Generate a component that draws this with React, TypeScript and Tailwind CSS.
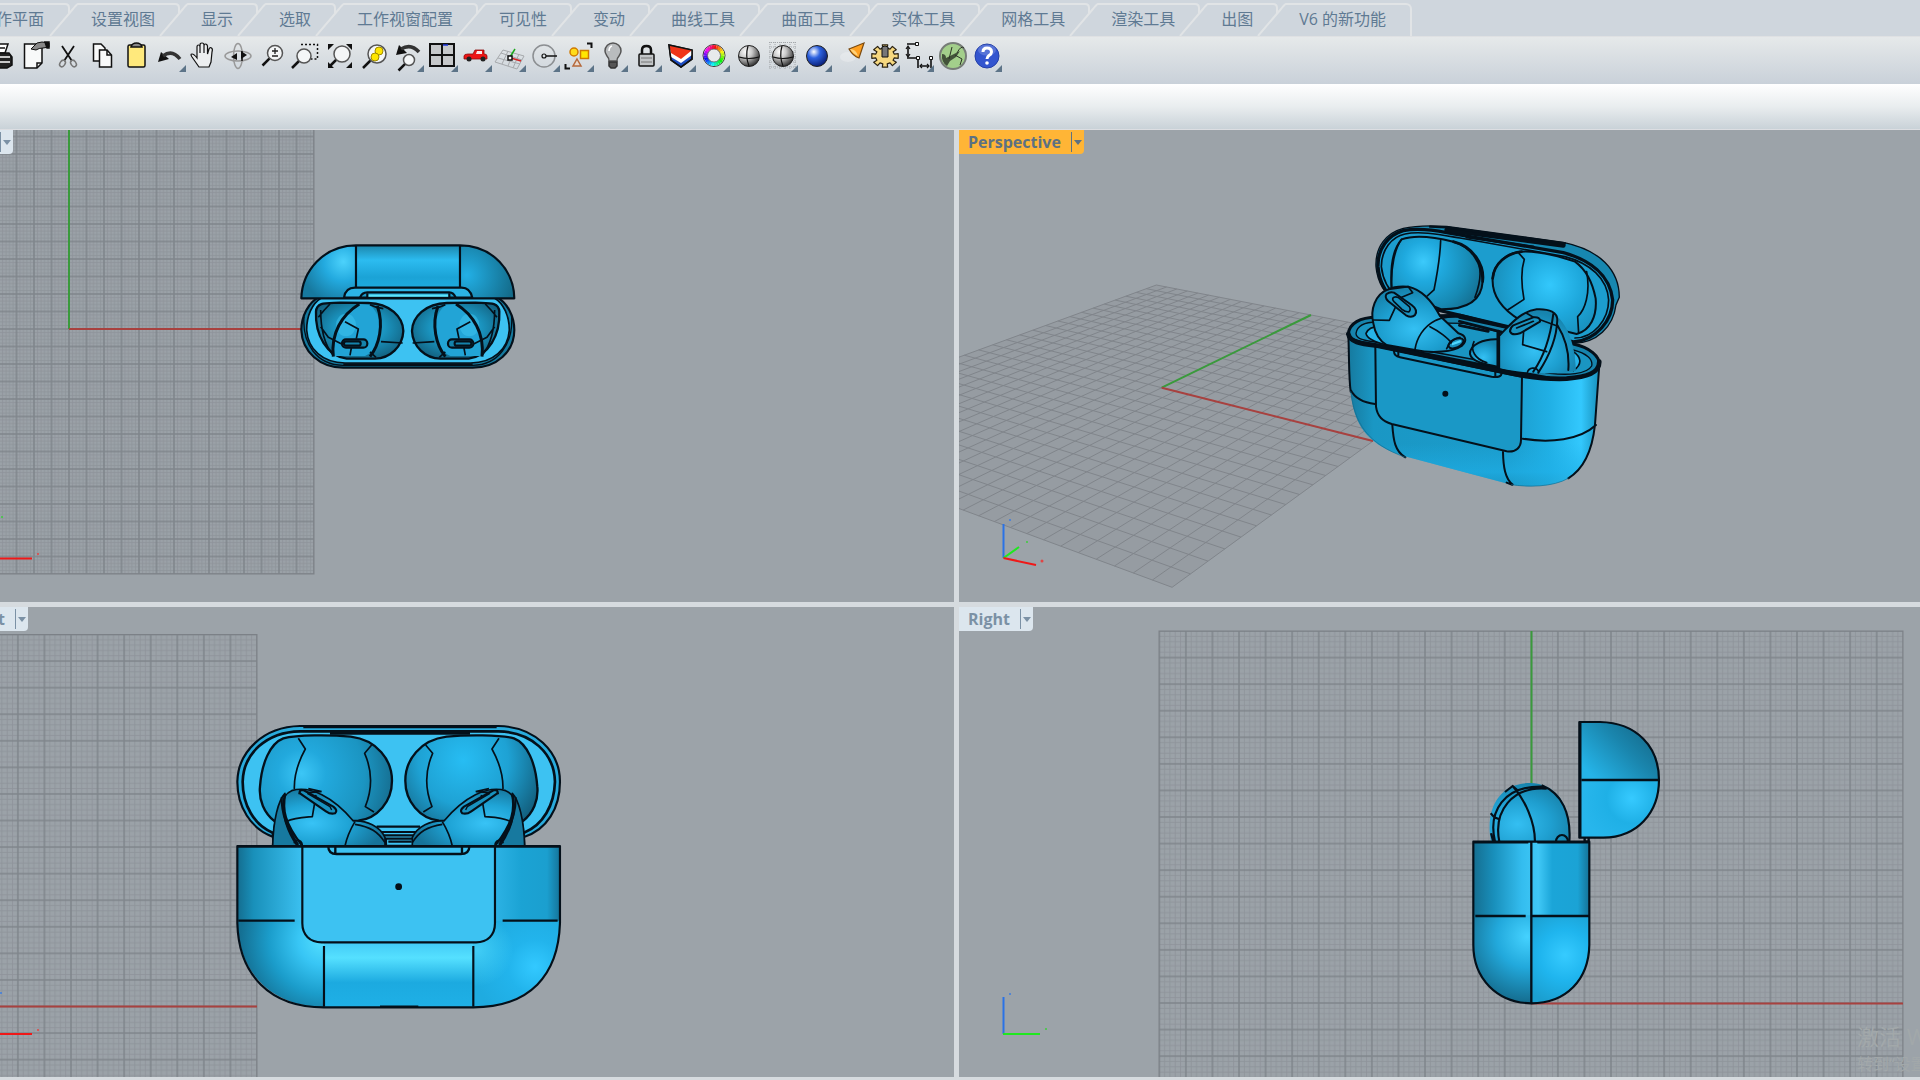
import type { ReactNode } from "react"

const tabs = [
    "作平面",
    "设置视图",
    "显示",
    "选取",
    "工作视窗配置",
    "可见性",
    "变动",
    "曲线工具",
    "曲面工具",
    "实体工具",
    "网格工具",
    "渲染工具",
    "出图",
    "V6 的新功能",
]

const LINE = "#04101a"

export default function App() {
    return (
        <div className="flex h-screen min-h-[640px] flex-col overflow-hidden bg-[#d8dce0] font-['Open_Sans','Noto_Sans_CJK_SC',sans-serif]">
            <TabBar />
            <Toolbar />
            <div className="h-[46px] shrink-0 border-b border-[#dcdee2] bg-linear-to-b from-white via-[#e9edef] to-[#c9d2d8]" />
            <main className="grid min-h-0 flex-1 grid-cols-[954fr_961fr] grid-rows-[472fr_470fr] gap-[5px] bg-[#d6dbdf] pb-[3px]">
                <Viewport title="Top" box="0 130 954 472" label="w-[13px]">
                    <TopView />
                </Viewport>
                <Viewport title="Perspective" box="959 130 961 472" active>
                    <PerspectiveView />
                </Viewport>
                <Viewport title="Front" box="0 607 954 470" label="w-7">
                    <FrontView />
                </Viewport>
                <Viewport title="Right" box="959 607 961 470">
                    <RightView />
                    <foreignObject x="1857" y="1020" width="63" height="57">
                        <div className="overflow-hidden whitespace-nowrap text-[#a2a8aa]">
                            <p className="text-[22px] leading-8">激活 Windows</p>
                            <p className="text-base leading-6">转到“设置”</p>
                        </div>
                    </foreignObject>
                </Viewport>
            </main>
        </div>
    )
}

function TabBar() {
    return (
        <nav className="h-9 shrink-0 overflow-hidden bg-[#cfd6dd] pt-[3px]">
            <ul className="-ml-1 flex h-[33px]">
                {tabs.map((tab, i) => (
                    <li key={tab} className="flex shrink-0">
                        {i > 0 && (
                            <svg className="h-[33px] w-[30px]" viewBox="0 0 30 33" fill="none" stroke="#e1e4e6" strokeWidth="2">
                                <path d="M0 1H17Q21 1 21 5V10" />
                                <path d="M2 33L25 6Q29 1 30 1" />
                            </svg>
                        )}
                        <button
                            className={
                                "border-t-2 border-[#e1e4e6] pb-[3px] text-base leading-6 whitespace-nowrap text-[#5f7a93] " +
                                (i === 0 ? "pr-1" : i === tabs.length - 1 ? "rounded-tr-md border-r-2 pr-6 pl-[13px]" : "pr-[3px] pl-[13px]")
                            }
                        >
                            {tab}
                        </button>
                    </li>
                ))}
            </ul>
        </nav>
    )
}

function Toolbar() {
    return (
        <div className="h-12 shrink-0 overflow-hidden border-t border-[#dfe1e3] bg-linear-to-b from-[#e6e9ea] to-[#c9d1d9] pt-[2px]">
            <div className="-ml-[17px] flex">
                {tools.map((tool) => (
                    <button key={tool.name} aria-label={tool.name} title={tool.name} className="size-[34px] shrink-0">
                        <svg viewBox="0 0 34 34" className="size-full" fill="none" stroke="#111" strokeWidth="1.5">
                            {tool.icon}
                            {tool.more && <path d="M33 26V33H26Z" fill="#5d7488" stroke="none" />}
                        </svg>
                    </button>
                ))}
            </div>
        </div>
    )
}

function Viewport(props: { title: string; box: string; label?: string; active?: boolean; children: ReactNode }) {
    const { title, box, label, active, children } = props
    return (
        <section className="relative min-h-0 min-w-0 overflow-hidden bg-[#9ca3a9]">
            <svg viewBox={box} preserveAspectRatio="xMinYMin slice" className="block h-full w-full">
                {children}
            </svg>
            <div className={"absolute top-0 left-0 flex justify-end overflow-hidden rounded-br-sm " + (label ?? "")}>
                <div
                    className={
                        "flex h-6 shrink-0 items-center text-base leading-6 font-bold " +
                        (active ? "bg-[#ffb536] text-[#5c7183]" : "bg-[#dce6ee] text-[#7b91a5]")
                    }
                >
                    <h2 className="pr-[10px] pl-[9px]">{title}</h2>
                    <button aria-label={title + " menu"} className="flex h-5 w-[13px] items-center justify-center border-l border-current">
                        <svg viewBox="0 0 8 5" className="h-[5px] w-2" fill="currentColor">
                            <path d="M0 0H8L4 5Z" />
                        </svg>
                    </button>
                </div>
            </div>
        </section>
    )
}

/* ---------- construction plane grids ---------- */

type GridProps = { id: string; x: number; y: number; step: number; right: number; bottom: number; left: number; top: number }

function FlatGrid({ id, x, y, step, left, top, right, bottom }: GridProps) {
    const minor = [1, 2, 3, 4].map((n) => (n * step) / 5)
    return (
        <>
            <defs>
                <pattern id={id} patternUnits="userSpaceOnUse" x={x} y={y} width={step} height={step}>
                    <rect width={step} height={step} fill="#9ba2a8" />
                    <path d={minor.map((m) => `M${m} 0V${step}M0 ${m}H${step}`).join("")} stroke="#8e949a" strokeWidth="0.9" />
                    <path d={`M0 0V${step}M0 0H${step}M${step} 0V${step}M0 ${step}H${step}`} stroke="#7f858b" strokeWidth="1.5" />
                </pattern>
            </defs>
            <rect x={left} y={top} width={right - left} height={bottom - top} fill={`url(#${id})`} stroke="#7c8187" />
        </>
    )
}

const HALF = 14

// plane coordinates in -1..1 to screen
function project(u: number, v: number) {
    const w = -0.1108 * u + 0.2098 * v + 1
    const x = (58.9 * u + 424.3 * v + 1161.7) / w
    const y = (4.7 * u - 6.6 * v + 387.7) / w
    return `${x.toFixed(1)} ${y.toFixed(1)}`
}

function PerspectiveGrid() {
    const lines: string[] = []
    for (let i = -HALF; i <= HALF; i++) {
        const t = i / HALF
        lines.push(`M${project(t, -1)}L${project(t, 1)}`, `M${project(-1, t)}L${project(1, t)}`)
    }
    return (
        <>
            <path d={`M${project(-1, -1)}L${project(1, -1)}L${project(1, 1)}L${project(-1, 1)}Z`} fill="#969ca2" />
            <path d={lines.join("")} stroke="#80858b" strokeWidth="1" />
        </>
    )
}

/* ---------- views ---------- */

function TopView() {
    return (
        <g fill="none">
            <FlatGrid id="gridTop" x={69} y={329} step={17.5} left={-176} top={84} right={314} bottom={574} />
            <path d="M69 130V329" stroke="#3a9a3c" strokeWidth="2" />
            <path d="M69 329H314" stroke="#a8413f" strokeWidth="2" />
            <path d="M0 558.5H32" stroke="#f01818" strokeWidth="2" />
            <circle cx="38" cy="554" r="1" fill="#e04545" />
            <circle cx="2" cy="517" r="1" fill="#3dcc3d" />
            <g transform="translate(280 230) scale(.3333)" stroke={LINE} strokeWidth="6.500" strokeLinejoin="round">
                <defs>
                    <linearGradient id="tMid" x2="0" y2="1">
                        <stop offset="0" stopColor="#1c86ac" />
                        <stop offset=".28" stopColor="#2cbcf0" />
                        <stop offset=".6" stopColor="#1ba3d6" />
                        <stop offset="1" stopColor="#1fb0e4" />
                    </linearGradient>
                    <radialGradient id="tLeft" gradientUnits="userSpaceOnUse" cx="190" cy="95" r="130">
                        <stop offset="0" stopColor="#4cd2fc" />
                        <stop offset=".45" stopColor="#23aadf" />
                        <stop offset="1" stopColor="#17799f" />
                    </radialGradient>
                    <radialGradient id="tRight" gradientUnits="userSpaceOnUse" cx="560" cy="135" r="150">
                        <stop offset="0" stopColor="#22b0e6" />
                        <stop offset="1" stopColor="#136987" />
                    </radialGradient>
                    <radialGradient id="tBud" cx=".5" cy=".45" r=".6">
                        <stop offset="0" stopColor="#35bdf0" />
                        <stop offset=".5" stopColor="#1a93be" />
                        <stop offset="1" stopColor="#125f7d" />
                    </radialGradient>
                </defs>
                <path d="M120 200C85 215 64 260 64 300C66 365 120 413 190 413H578C650 413 703 365 703 300C703 260 682 215 647 200Z" fill="#157a9f" />
                <path d="M125 203C95 220 80 260 80 300C84 358 128 399 195 399H572C640 399 684 358 688 300C688 260 672 220 642 203Z" fill="#3dc2f2" strokeWidth="5" />
                <path d="M72 260C66 340 110 406 190 406H578C655 406 700 340 695 260" strokeWidth="4" />
                <path d="M190 403H578" strokeWidth="7" />
                <TopBud />
                <g transform="translate(766 0) scale(-1 1)">
                    <TopBud />
                </g>
                <path d="M228 46C130 46 66 125 64 205H228Z" fill="url(#tLeft)" stroke="none" />
                <path d="M540 46C640 46 702 125 703 205H540Z" fill="url(#tRight)" stroke="none" />
                <path d="M228 46H540V205H228Z" fill="url(#tMid)" stroke="none" />
                <path d="M192 203C195 182 208 173 225 173H545C562 173 572 182 577 203Z" fill="#2cb4e6" />
                <path d="M240 203C244 191 250 187 262 187H508C518 187 523 192 527 203Z" fill="#1c9ccb" />
                <path d="M262 197H508" stroke="#5ee4fb" strokeWidth="7" />
                <path d="M64 205C66 125 130 46 228 46H540C640 46 702 125 703 205ZM228 46V173M540 46V173M262 190V203M508 190V203" />
            </g>
        </g>
    )
}

function TopBud() {
    return (
        <g>
            <path d="M108 245C110 215 140 220 180 218L265 219C330 220 369 262 370 303C368 350 330 385 285 386H200C140 378 105 315 108 245Z" fill="url(#tBud)" strokeWidth="7" />
            <path d="M235 222C185 255 158 300 158 378H255C310 350 318 270 270 224Z" fill="#22a4d6" stroke="none" />
            <ellipse cx="198" cy="285" rx="30" ry="34" fill="#45c9f5" opacity=".45" stroke="none" />
            <path d="M238 222C185 255 152 310 160 380M292 228C312 285 298 345 270 380" strokeWidth="9" />
            <path d="M270 224C285 232 296 234 310 236M195 275L235 297L229 326M303 335L368 339M214 354L210 376M122 240C122 300 135 345 158 374M115 262L133 240L150 222M122 290L145 322L185 342M270 366L288 382" strokeWidth="5" />
            <rect x="186" y="328" width="76" height="25" rx="12" fill="#1583ab" />
            <rect x="192" y="334" width="50" height="13" rx="6" />
        </g>
    )
}

function FrontView() {
    return (
        <g fill="none">
            <FlatGrid id="gridFront" x={257} y={1006.5} step={26.57} left={-487} top={634.5} right={257} bottom={1100} />
            <path d="M0 1006.5H257" stroke="#a8413f" strokeWidth="2" />
            <path d="M0 1034H32" stroke="#f01818" strokeWidth="2" />
            <circle cx="38" cy="1030" r="1" fill="#e04545" />
            <circle cx="1" cy="993" r="1" fill="#3d7de0" />
            <g transform="translate(220 710) scale(.3333)" stroke={LINE} strokeWidth="6.500" strokeLinejoin="round">
                <defs>
                    <radialGradient id="fCavL" gradientUnits="userSpaceOnUse" cx="245" cy="190" r="290">
                        <stop offset="0" stopColor="#3cc6f6" />
                        <stop offset=".25" stopColor="#22a9dd" />
                        <stop offset=".65" stopColor="#1b95c2" />
                        <stop offset="1" stopColor="#15698a" />
                    </radialGradient>
                    <radialGradient id="fCavR" gradientUnits="userSpaceOnUse" cx="730" cy="150" r="270">
                        <stop offset="0" stopColor="#27bdf3" />
                        <stop offset=".5" stopColor="#1ea2d4" />
                        <stop offset="1" stopColor="#115672" />
                    </radialGradient>
                    <linearGradient id="fSides">
                        <stop offset="0" stopColor="#146d8f" />
                        <stop offset=".05" stopColor="#1990ba" />
                        <stop offset=".2" stopColor="#3bc0f0" />
                        <stop offset=".8" stopColor="#2cb2e4" />
                        <stop offset=".88" stopColor="#1ba3d4" />
                        <stop offset=".96" stopColor="#1b9fcf" />
                        <stop offset="1" stopColor="#157499" />
                    </linearGradient>
                    <linearGradient id="fMid" x2="0" y2="1">
                        <stop offset="0" stopColor="#3bc3f3" />
                        <stop offset=".3" stopColor="#55e0ff" />
                        <stop offset=".65" stopColor="#1caae0" />
                        <stop offset="1" stopColor="#1fb0e6" />
                    </linearGradient>
                    <radialGradient id="fCornerL" gradientUnits="userSpaceOnUse" cx="310" cy="690" r="250">
                        <stop offset="0" stopColor="#55e0ff" />
                        <stop offset=".3" stopColor="#38c6f5" />
                        <stop offset=".65" stopColor="#1b9dcb" />
                        <stop offset="1" stopColor="#146f92" />
                    </radialGradient>
                    <radialGradient id="fCornerR" gradientUnits="userSpaceOnUse" cx="945" cy="770" r="180">
                        <stop offset="0" stopColor="#33c9ff" />
                        <stop offset=".45" stopColor="#22b4ec" />
                        <stop offset="1" stopColor="#1fabe0" />
                    </radialGradient>
                    <radialGradient id="fBud" cx=".35" cy=".6" r=".65">
                        <stop offset="0" stopColor="#38c3f6" />
                        <stop offset=".5" stopColor="#1fa4d6" />
                        <stop offset="1" stopColor="#167399" />
                    </radialGradient>
                    <radialGradient id="fGlow" gradientUnits="userSpaceOnUse" cx="770" cy="720" r="110">
                        <stop offset="0" stopColor="#50dcff" stopOpacity=".7" />
                        <stop offset="1" stopColor="#50dcff" stopOpacity="0" />
                    </radialGradient>
                </defs>
                <path d="M240 48H835C945 50 1020 125 1020 215C1020 295 980 360 912 381L905 408H165L158 380C92 356 52 290 52 215C54 125 130 50 240 48Z" fill="#2aabdc" />
                <path d="M240 64H835C935 66 1003 130 1005 215C1003 285 970 345 912 368L905 408H165L158 368C102 345 68 285 68 215C70 130 140 66 240 64Z" fill="#3dc2f2" strokeWidth="8" />
                <path d="M330 70H750M250 50H830" strokeWidth="9" />
                <path d="M470 350H600M480 366H592M484 376H588M494 386H580V408M498 386V408M505 395H575" />
                <FrontCavity fill="url(#fCavL)" />
                <path d="M907 335C940 310 956 270 952 230C947 160 922 100 882 85C842 74 740 74 680 80C600 90 556 150 556 212C556 275 600 325 657 332Z" fill="url(#fCavR)" stroke="none" />
                <g transform="translate(1072 0) scale(-1 1)">
                    <FrontCavity fill="none" />
                    <FrontBud />
                </g>
                <FrontBud />
                <path d="M52 408H1020V640H52Z" fill="url(#fSides)" stroke="none" />
                <path d="M52 632H320V892C155 892 55 790 52 632Z" fill="url(#fCornerL)" stroke="none" />
                <path d="M1020 632H755V892C925 892 1018 790 1020 632Z" fill="url(#fCornerR)" stroke="none" />
                <path d="M312 680H760V892H312Z" fill="url(#fMid)" stroke="none" />
                <path d="M760 632H890V840H760Z" fill="url(#fGlow)" stroke="none" />
                <path d="M52 408H1020V640C1015 795 930 892 760 892H312C150 892 56 795 52 640Z" />
                <path d="M247 408V640C247 675 270 697 305 697H768C803 697 825 675 825 640V408Z" fill="#3dc2f2" />
                <path d="M55 632H224M848 632H1013M312 708V890M760 708V890M480 890H595" />
                <path d="M325 410C325 425 335 432 350 432H722C740 432 748 425 748 410M346 410V432M726 410V432" strokeWidth="7" />
                <path d="M52 409H1020" strokeWidth="8" />
                <circle cx="536" cy="530" r="7" fill={LINE} />
            </g>
        </g>
    )
}

function FrontCavity({ fill }: { fill: string }) {
    return (
        <>
            <path d="M165 335C132 310 116 270 120 230C125 160 150 100 190 85C230 74 332 74 392 80C472 90 516 150 516 212C516 275 472 325 415 332Z" fill={fill} strokeWidth="7" />
            <path d="M235 85L256 117C235 155 222 195 223 237M455 105L434 130C456 180 460 230 436 290L462 306" strokeWidth="5" />
        </>
    )
}

function FrontBud() {
    return (
        <>
            <path d="M158 408C160 330 180 255 215 242C270 225 340 262 400 333C440 330 480 350 495 382V408Z" fill="url(#fBud)" strokeWidth="5" />
            <path d="M158 408C160 330 175 270 195 250C178 310 205 370 232 408Z" fill="#17799f" strokeWidth="5" />
            <path d="M185 262C184 320 210 370 235 405M196 252C186 300 195 340 245 405" />
            <path d="M198 335C225 322 250 322 277 320L288 255M405 335C390 360 380 385 375 408M405 343C450 350 475 365 495 398M235 250L302 245M265 236L305 245M222 400A12 12 0 0 1 246 408" strokeWidth="5" />
            <path d="M250 240L340 290Q355 302 345 310Q332 314 318 304L240 250Q236 240 250 240Z" fill="#1992bf" />
            <path d="M262 250L330 290L335 300" strokeWidth="4" />
        </>
    )
}

function RightView() {
    return (
        <g fill="none">
            <FlatGrid id="gridRight" x={1531.3} y={1003} step={26.57} left={1159} top={631} right={1903} bottom={1100} />
            <path d="M1531.5 631V1003" stroke="#3a9a3c" strokeWidth="2" />
            <path d="M1531 1003.5H1903" stroke="#a8413f" strokeWidth="2" />
            <path d="M1003.5 997V1034" stroke="#2a72e6" strokeWidth="2" />
            <path d="M1003 1034H1040" stroke="#1fe81f" strokeWidth="2" />
            <circle cx="1010" cy="994" r="1" fill="#3d7de0" />
            <circle cx="1046" cy="1029" r="1" fill="#3dcc3d" />
            <g transform="translate(1440 700) scale(.3333)" stroke={LINE} strokeWidth="6.500" strokeLinejoin="round">
                <defs>
                    <linearGradient id="rSide">
                        <stop offset="0" stopColor="#156e90" />
                        <stop offset=".18" stopColor="#1990bc" />
                        <stop offset=".42" stopColor="#34bdef" />
                        <stop offset=".56" stopColor="#40c8f6" />
                        <stop offset=".68" stopColor="#1ba5d8" />
                        <stop offset=".9" stopColor="#1ba3d5" />
                        <stop offset="1" stopColor="#157297" />
                    </linearGradient>
                    <radialGradient id="rBotL" gradientUnits="userSpaceOnUse" cx="262" cy="710" r="205">
                        <stop offset="0" stopColor="#45d2ff" />
                        <stop offset=".45" stopColor="#22a9dc" />
                        <stop offset="1" stopColor="#14698a" />
                    </radialGradient>
                    <radialGradient id="rBotR" gradientUnits="userSpaceOnUse" cx="375" cy="765" r="150">
                        <stop offset="0" stopColor="#36cbff" />
                        <stop offset=".5" stopColor="#1fb5ee" />
                        <stop offset="1" stopColor="#1b9fd0" />
                    </radialGradient>
                    <linearGradient id="rLidTop" x1="0" y1=".7" x2="1" y2="0">
                        <stop offset="0" stopColor="#25b4e8" />
                        <stop offset=".5" stopColor="#1a86ae" />
                        <stop offset="1" stopColor="#135f7d" />
                    </linearGradient>
                    <radialGradient id="rLidBot" gradientUnits="userSpaceOnUse" cx="575" cy="295" r="150">
                        <stop offset="0" stopColor="#36caff" />
                        <stop offset=".5" stopColor="#1fb0e6" />
                        <stop offset="1" stopColor="#27b6ec" />
                    </radialGradient>
                    <radialGradient id="rBud" cx=".35" cy=".7" r=".7">
                        <stop offset="0" stopColor="#34bff2" />
                        <stop offset=".6" stopColor="#1f9fd0" />
                        <stop offset="1" stopColor="#1884ad" />
                    </radialGradient>
                </defs>
                <path d="M153 425C134 325 178 249 270 249C352 250 396 320 388 425Z" fill="url(#rBud)" stroke="none" />
                <path d="M305 256C365 280 394 340 388 425M165 425C144 335 190 256 310 260M178 425C160 335 215 258 320 266M218 258C255 300 285 365 285 425M152 340L163 352L178 358M195 276L218 258L232 270M153 400L160 425" />
                <path d="M348 425A18 20 0 0 1 384 425" strokeWidth="6.500" />
                <path d="M418 66H480C590 68 657 140 657 240H418Z" fill="url(#rLidTop)" stroke="none" />
                <path d="M418 240H657C657 340 590 412 490 413H418Z" fill="url(#rLidBot)" stroke="none" />
                <path d="M418 66H480C590 68 657 140 657 240C657 340 590 412 490 413H418Z" />
                <path d="M421 66V413M425 240H657M434 413V425H446V413" strokeWidth="7" />
                <path d="M100 425H448V648H100Z" fill="url(#rSide)" stroke="none" />
                <path d="M100 646H274V910C170 908 100 835 100 735Z" fill="url(#rBotL)" stroke="none" />
                <path d="M274 646H448V735C446 840 378 910 274 910Z" fill="url(#rBotR)" stroke="none" />
                <path d="M100 425H448V735C446 840 378 910 274 910C170 908 100 835 100 735Z" />
                <path d="M274 425V910M106 648H257M274 648H448M100 427H265M292 427H448" strokeWidth="7" />
            </g>
        </g>
    )
}

function PerspectiveView() {
    return (
        <g fill="none">
            <PerspectiveGrid />
            <path d="M1161.7 387.7L1311 315" stroke="#3a9a3c" strokeWidth="2" />
            <path d="M1161.7 387.7L1373 441" stroke="#a8413f" strokeWidth="2" />
            <path d="M1003.5 558V524" stroke="#2a72e6" strokeWidth="2" />
            <path d="M1003.5 558L1019 547" stroke="#1fe81f" strokeWidth="2" />
            <path d="M1003.5 558L1036 565" stroke="#f01818" strokeWidth="2" />
            <circle cx="1010" cy="520" r="1" fill="#3d7de0" />
            <circle cx="1027" cy="542" r="1" fill="#3dcc3d" />
            <circle cx="1042" cy="561" r="1.5" fill="#e04545" />
            <g transform="translate(1320 210) scale(.3333)" stroke={LINE} strokeWidth="6" strokeLinejoin="round" strokeLinecap="round">
                <defs>
                    <radialGradient id="pCavL" gradientUnits="userSpaceOnUse" cx="310" cy="155" r="200">
                        <stop offset="0" stopColor="#3ccafb" />
                        <stop offset=".3" stopColor="#1fa9de" />
                        <stop offset=".7" stopColor="#178ab4" />
                        <stop offset="1" stopColor="#146a8b" />
                    </radialGradient>
                    <radialGradient id="pCavR" gradientUnits="userSpaceOnUse" cx="690" cy="225" r="190">
                        <stop offset="0" stopColor="#33c8fc" />
                        <stop offset=".5" stopColor="#1ea8dc" />
                        <stop offset="1" stopColor="#178ab5" />
                    </radialGradient>
                    <linearGradient id="pBody">
                        <stop offset="0" stopColor="#167a9f" />
                        <stop offset=".1" stopColor="#1a97c4" />
                        <stop offset=".65" stopColor="#1b9ccc" />
                        <stop offset=".8" stopColor="#20afe4" />
                        <stop offset=".93" stopColor="#33c8fd" />
                        <stop offset="1" stopColor="#1992be" />
                    </linearGradient>
                    <radialGradient id="pBud" cx=".45" cy=".65" r=".6">
                        <stop offset="0" stopColor="#34c0f3" />
                        <stop offset=".6" stopColor="#1d9fd0" />
                        <stop offset="1" stopColor="#1784ae" />
                    </radialGradient>
                    <linearGradient id="pLow" x2="0" y2="1">
                        <stop offset=".55" stopColor="#1fb0e8" stopOpacity="0" />
                        <stop offset=".85" stopColor="#1fb0e8" stopOpacity=".6" />
                        <stop offset="1" stopColor="#1a9bcb" stopOpacity=".3" />
                    </linearGradient>
                </defs>

                {/* lid */}
                <path d="M250 55C200 68 165 110 168 170C172 215 195 255 225 270L760 400C830 400 880 350 888 285L898 262C898 180 840 120 730 97L380 49C330 46 280 48 250 55Z" fill="#1787b0" strokeWidth="4" />
                <path d="M250 62C205 75 172 115 174 170C178 215 198 250 225 270L760 396C830 390 878 330 878 270C870 195 810 150 730 128L380 68C320 56 280 56 250 62Z" fill="#1c9dce" strokeWidth="10" />
                <path d="M255 72C215 80 184 120 184 170C188 205 205 240 232 262M255 72C300 62 360 74 420 84L735 140C810 160 862 205 866 270C866 330 820 384 765 384" strokeWidth="5" />
                <path d="M380 60L730 106" strokeWidth="14" />
                <path d="M330 50L380 52L735 100M440 82L640 110" strokeWidth="7" />
                <path d="M245 88C280 75 340 80 400 95C455 110 485 160 488 215C485 265 450 298 365 298L215 240C210 170 220 115 245 88Z" fill="url(#pCavL)" />
                <path d="M245 88C225 115 212 170 215 235M362 92C360 150 350 200 342 240L322 258M478 170C485 200 475 235 465 262" strokeWidth="5" />
                <path d="M600 125C650 120 720 140 765 155C800 180 818 220 827 265C832 320 810 362 770 372L600 330C550 300 515 260 518 205C522 160 560 130 600 125Z" fill="url(#pCavR)" />
                <path d="M597 130L613 148C600 190 605 230 612 268L563 300M800 185C812 250 795 300 773 320L776 370" strokeWidth="5" />
                <path d="M400 95C460 110 495 165 488 215M518 205C522 160 560 130 605 125" strokeWidth="8" />

                {/* inside of the case */}
                <path d="M85 372C88 340 120 322 170 322L420 316L760 402C810 412 840 440 838 465C825 515 760 512 690 505L230 415L165 405C110 395 84 390 85 372Z" fill="#1784ad" strokeWidth="9" />
                <path d="M108 370C112 345 140 336 170 336L430 340L760 420C800 430 820 448 815 468C800 494 740 496 690 490L240 408L165 396C125 390 108 385 108 370Z" fill="#1a95c2" strokeWidth="4" />
                <path d="M138 370C145 355 160 350 175 350L200 405C160 395 140 385 138 370ZM760 425C782 440 790 462 760 482Z" fill="#27b4e8" strokeWidth="5" />
                <path d="M418 322L556 352M418 334L545 366M418 346L505 364" strokeWidth="8" />

                {/* left bud */}
                <path d="M205 238C165 252 150 300 160 340C165 370 175 390 200 405L285 420C340 432 400 425 425 408C445 390 435 375 415 370L360 318C335 270 300 238 265 230C240 228 220 230 205 238Z" fill="url(#pBud)" />
                <path d="M285 418C290 385 310 350 345 332C365 322 400 318 430 322M330 350C355 362 385 385 395 400M380 416C385 400 400 385 420 382M160 330L208 331L226 292M205 238L265 230L278 248L245 262" strokeWidth="5" />
                <path d="M222 248L275 285Q295 300 285 315Q275 325 258 316L205 274Q192 262 200 252Q210 244 222 248Z" fill="#1a93c0" />
                <path d="M222 262Q232 258 242 268L268 290Q274 300 266 306Q255 306 246 298L222 275Q214 266 222 262Z" strokeWidth="5" />
                <ellipse cx="408" cy="400" rx="24" ry="13" transform="rotate(-25 408 400)" />
                <path d="M398 402L420 394" stroke="#4fd8ff" strokeWidth="7" />

                {/* right bud */}
                <path d="M540 388C490 384 448 405 450 432C455 455 490 462 540 472Z" fill="url(#pBud)" />
                <path d="M462 395C450 420 465 448 500 458" strokeWidth="5" />
                <path d="M540 375C580 340 605 305 660 298C720 300 765 370 768 482C720 495 600 490 540 475Z" fill="url(#pBud)" stroke="none" />
                <path d="M535 365V480" strokeWidth="11" />
                <path d="M540 375C570 345 600 305 650 298C690 296 712 308 712 330C710 390 680 450 655 488M700 312C690 390 665 450 640 485M712 345C740 390 748 440 745 480" />
                <path d="M612 350L608 404L680 425M620 310L640 322L712 348M622 488A18 18 0 0 1 656 485" strokeWidth="5" />
                <path d="M580 346L640 322Q662 320 660 335L600 370Q575 378 570 364Q570 354 580 346Z" fill="#1a93c0" />
                <path d="M590 354L640 334" strokeWidth="5" />

                {/* shell */}
                <path d="M85 375C110 400 140 405 165 408L545 490C640 510 790 520 836 465L825 645C815 720 795 780 745 805C700 832 620 832 575 824L240 735C140 700 100 640 92 545C86 490 88 440 85 375Z" fill="url(#pBody)" stroke="none" />
                <path d="M92 545C200 600 400 660 603 700C700 700 780 690 825 645C815 720 795 780 745 805C700 832 620 832 575 824L240 735C140 700 100 640 92 545Z" fill="url(#pLow)" stroke="none" />
                <path d="M166 408L168 590C172 620 188 633 215 642L560 724C590 728 603 710 603 690L606 500L545 488Z" fill="#1a98c6" />
                <path d="M85 375C88 450 86 500 92 545M838 465L825 645C818 710 795 775 745 805M575 824L560 818M92 540C105 565 130 578 165 582M608 686C690 700 780 690 828 645M217 645C220 690 225 725 256 742M549 726C550 770 555 805 578 824" />
                <path d="M92 545C105 640 140 700 256 742M575 824C620 832 700 832 745 805" stroke="#146d90" strokeWidth="2" />
                <path d="M85 372C90 395 120 402 165 406L545 484C620 502 690 508 740 506C800 500 838 490 838 455" strokeWidth="14" />
                <path d="M222 424Q222 438 240 442L515 500Q545 505 545 488M235 424V440M526 486V498" />
                <circle cx="376" cy="551" r="6" fill={LINE} />
            </g>
        </g>
    )
}

/* ---------- toolbar icons ---------- */

function Lens({ x, y, r, fill = "#f4f6f7" }: { x: number; y: number; r: number; fill?: string }) {
    return (
        <>
            <circle cx={x} cy={y} r={r} fill={fill} stroke="#555" />
            <path d={`M${x - r * 0.75} ${y + r * 0.75}L${x - r - 5} ${y + r + 5}`} strokeWidth="2.5" />
        </>
    )
}

function Sphere({ light, dark }: { light: string; dark: string }) {
    const id = "ball" + light.slice(1) + dark.slice(1)
    return (
        <>
            <radialGradient id={id} cx=".35" cy=".3" r=".75">
                <stop offset="0" stopColor="#fff" />
                <stop offset=".4" stopColor={light} />
                <stop offset="1" stopColor={dark} />
            </radialGradient>
            <circle cx="18" cy="17" r="10.5" fill={`url(#${id})`} stroke="#222" strokeWidth="1" />
        </>
    )
}

const wheel = Array.from({ length: 24 }, (_, i) => {
    const a = (i * Math.PI) / 12
    const b = ((i + 1.1) * Math.PI) / 12
    const at = (t: number) => `${(17 + 8.5 * Math.sin(t)).toFixed(2)} ${(16.5 - 8.5 * Math.cos(t)).toFixed(2)}`
    return { d: `M${at(a)}L${at(b)}`, color: `hsl(${(i * 15) % 360} 90% 50%)` }
})

// eight teeth round the hub at 18,17
const gear = Array.from({ length: 8 }, (_, i) => {
    const p = (r: number, t: number) => {
        const a = ((i + t) * Math.PI) / 4
        return `${(18 + r * Math.cos(a)).toFixed(1)} ${(17 + r * 0.85 * Math.sin(a)).toFixed(1)}`
    }
    return `${i ? "L" : "M"}${p(9.5, -0.3)}L${p(13.5, -0.26)}L${p(13.5, 0.26)}L${p(9.5, 0.3)}`
}).join("")

const tools: { name: string; more?: boolean; icon: ReactNode }[] = [
    {
        name: "Print",
        icon: (
            <>
                <path d="M8 14L12 5H25L22 14Z" fill="#fff" />
                <path d="M4 14H26L29 18V26L24 29H4Z" fill="#222" />
                <path d="M17 18H27M17 23H27" stroke="#fff" />
                <path d="M17 9H22" />
            </>
        ),
    },
    {
        name: "Document Properties",
        icon: (
            <>
                <path d="M7.500 5H25V24L20 29H7.500Z" fill="#f8f9f9" />
                <path d="M25 24H20V29" />
                <path d="M14 10L20 4Q24 2 32 4V8L26 9Q22 9 19 11Z" fill="#888" strokeWidth="1" />
                <path d="M28 3H32V9H30Z" fill="#111" />
            </>
        ),
    },
    {
        name: "Cut",
        icon: (
            <>
                <path d="M11 7L21 22M23 7L13 22" strokeWidth="1.8" />
                <ellipse cx="11.500" cy="24.500" rx="2.500" ry="3.500" transform="rotate(35 11.500 24.500)" stroke="#777" />
                <ellipse cx="22.500" cy="24.500" rx="2.500" ry="3.500" transform="rotate(-35 22.500 24.500)" stroke="#777" />
            </>
        ),
    },
    {
        name: "Copy",
        icon: (
            <>
                <path d="M8.500 5H16L20 9V22H8.500Z" fill="#f8f9f9" />
                <path d="M14.500 11H22L26.500 16V28H14.500Z" fill="#f8f9f9" />
                <path d="M22 11V16H26" />
            </>
        ),
    },
    {
        name: "Paste",
        icon: (
            <>
                <rect x="9" y="6" width="17" height="22" rx="1.500" fill="#ffe97c" />
                <path d="M12 8Q13 4 17.500 4Q22 4 23 8Z" fill="#888" />
            </>
        ),
    },
    {
        name: "Undo",
        more: true,
        icon: (
            <>
                <path d="M5 23L8 13L16 20Z" fill="#111" stroke="none" />
                <path d="M10 17Q19 10 27 20" stroke="#333" strokeWidth="3.500" />
            </>
        ),
    },
    {
        name: "Pan",
        icon: (
            <path
                d="M12 28L5 18Q3 15 5 15Q7 15 10 19V8Q10 6 11.500 6Q13 6 13 8V14V6Q13 4 15 4Q17 4 17 6V14V7Q17 5 18.500 5Q20 5 20.500 7V15L22 10Q23 8 24.500 9Q26 10 25 13L24 23L22 28Z"
                fill="#eceeef"
                strokeWidth="1.2"
            />
        ),
    },
    {
        name: "Rotate View",
        icon: (
            <>
                <ellipse cx="17" cy="17" rx="13" ry="5" stroke="#999" />
                <ellipse cx="17" cy="17" rx="4.500" ry="12.500" stroke="#999" />
                <path d="M20 12L26 16L20 20ZM16 14V21L10 18Z" fill="#111" stroke="none" />
                <path d="M21 12V22" />
            </>
        ),
    },
    {
        name: "Zoom Dynamic",
        icon: (
            <>
                <Lens x={20} y={14} r={7.5} />
                <path d="M20 9V15M17 12H23M17 17H23" stroke="#222" strokeWidth="1.300" />
            </>
        ),
    },
    {
        name: "Zoom Window",
        icon: (
            <>
                <path d="M12 5.500H28.500V20H22" strokeDasharray="2 2" />
                <Lens x={15} y={17} r={7} />
            </>
        ),
    },
    {
        name: "Zoom Extents",
        icon: (
            <>
                <Lens x={19} y={15} r={8} />
                <path d="M5 5H11L5 11ZM29 5V11L23 5ZM5 29V23L11 29ZM29 29H23L29 23Z" fill="#111" stroke="none" />
            </>
        ),
    },
    {
        name: "Zoom Selected",
        icon: (
            <>
                <Lens x={20} y={15} r={9} />
                <circle cx="22" cy="12" r="4" fill="#ffe600" stroke="#a08b00" strokeWidth="1" />
                <circle cx="18" cy="18" r="4" fill="#ffe600" stroke="#a08b00" strokeWidth="1" />
            </>
        ),
    },
    {
        name: "Undo View Change",
        more: true,
        icon: (
            <>
                <path d="M5 16L8 6L16 14Z" fill="#111" stroke="none" />
                <path d="M10 10Q20 4 28 13" stroke="#333" strokeWidth="3.500" />
                <Lens x={18} y={21} r={5.5} />
            </>
        ),
    },
    {
        name: "Four Viewports",
        more: true,
        icon: (
            <>
                <rect x="5" y="5" width="24" height="22" fill="#c6c8ca" strokeWidth="2" />
                <path d="M17 5V27M5 16H29" strokeWidth="2" />
                <path d="M18 6H23" stroke="#1d35d8" strokeWidth="1.500" />
            </>
        ),
    },
    {
        name: "Named Views",
        more: true,
        icon: (
            <>
                <path d="M5 20V17Q5 15 9 15H14L16 11H25V15Q28 15 28 17V20Z" fill="#ed1515" stroke="#8c0c0c" strokeWidth=".8" />
                <path d="M17 15L18 12H23V15Z" fill="#fbe9e9" stroke="none" />
                <circle cx="10" cy="20" r="2.500" fill="#222" stroke="none" />
                <circle cx="24" cy="20" r="2.500" fill="#222" stroke="none" />
            </>
        ),
    },
    {
        name: "Set CPlane",
        more: true,
        icon: (
            <>
                <path d="M10 11L31 17L24 30L2 23ZM15 12L9 25M20 14L15 27M26 15L20 29M8 14L29 21M5 19L27 25" stroke="#a6a9ac" strokeWidth="1" />
                <path d="M17 18L22 10" stroke="#1aa81a" />
                <path d="M18 19L28 22" stroke="#d42222" />
                <rect x="15" y="17" width="4" height="4" fill="#fff" />
            </>
        ),
    },
    {
        name: "Object Snap",
        more: true,
        icon: (
            <>
                <circle cx="17" cy="17" r="11" stroke="#8c8f92" />
                <circle cx="17" cy="17" r="2" strokeWidth="1.200" />
                <path d="M19 17H30" />
            </>
        ),
    },
    {
        name: "Select",
        more: true,
        icon: (
            <>
                <circle cx="13" cy="13" r="4" fill="#ffdc1a" stroke="#d07a00" />
                <rect x="19.500" y="11.500" width="8" height="8" fill="#ffe600" stroke="#d07a00" />
                <path d="M16 20L20 27H12Z" stroke="#b5683a" fill="#e8d8cd" />
                <path d="M26 4.500H30.500V9M4.500 25V29.500H9" strokeWidth="2" />
            </>
        ),
    },
    {
        name: "Hide",
        more: true,
        icon: (
            <>
                <path d="M14 22Q14 19 12 17Q10 14 10 12A8 8 0 0 1 26 12Q26 14 24 17Q22 19 22 22Z" fill="#b9bcbe" stroke="#555" />
                <path d="M14 23H22V27L20 29H16L14 27Z" fill="#555" stroke="#333" />
                <path d="M14 12Q14 8 17 7" stroke="#fff" />
            </>
        ),
    },
    {
        name: "Lock",
        more: true,
        icon: (
            <>
                <path d="M13 15V11Q13 7 17.500 7Q22 7 22 11V15" strokeWidth="2.500" />
                <rect x="10" y="15" width="15" height="12" rx="1" fill="#c2c5c7" />
                <path d="M12 19H23M12 23H23" stroke="#777" strokeWidth="1" />
            </>
        ),
    },
    {
        name: "Layers",
        more: true,
        icon: (
            <>
                <path d="M6 6L29 11V20L18 28L8 21Z" fill="#1d4cc0" />
                <path d="M6 7L29 11V16L18 24L8 18Z" fill="#fff" stroke="none" />
                <path d="M6 6L18 9L29 11L28 12L18 20L8 14Z" fill="#f0351a" stroke="none" />
                <path d="M6 6L29 11V20L18 28L8 21Z" />
            </>
        ),
    },
    {
        name: "Object Properties",
        more: true,
        icon: (
            <>
                <circle cx="17" cy="16.500" r="11" fill="#fff" stroke="#333" strokeWidth="1" />
                {wheel.map((w) => (
                    <path key={w.d} d={w.d} stroke={w.color} strokeWidth="4" />
                ))}
                <circle cx="17" cy="16.500" r="6.500" fill="#e7eaec" stroke="#555" strokeWidth=".8" />
            </>
        ),
    },
    {
        name: "Shade",
        icon: (
            <>
                <Sphere light="#c9c9c9" dark="#2a2a2a" />
                <path d="M8 18Q18 21 28 18M17 7Q14 17 18 27" strokeWidth="1.200" />
            </>
        ),
    },
    {
        name: "Shaded Viewport",
        more: true,
        icon: (
            <>
                <path d="M4 3.500H32M4 8H32M4 13H32M4 18H32M4 23H32M4 28H32M5 3V30M10 3V30M15 3V30M20 3V30M25 3V30M30 3V30" stroke="#a4a8ab" strokeDasharray="1 1" strokeWidth="1" />
                <Sphere light="#cacaca" dark="#2b2b2b" />
                <path d="M8 18Q18 21 28 18M17 7Q14 17 18 27" strokeWidth="1.200" />
            </>
        ),
    },
    {
        name: "Render",
        more: true,
        icon: <Sphere light="#2d62e0" dark="#071a70" />,
    },
    {
        name: "Spotlight",
        more: true,
        icon: (
            <>
                <ellipse cx="15" cy="18" rx="8" ry="5" fill="#fff" opacity=".25" stroke="none" />
                <path d="M16 10L31 4L26 19Q20 17 16 10Z" fill="#ffa020" stroke="#7a4a10" strokeWidth="1.200" />
                <path d="M17 10Q23 10 25 17Q20 15 17 10Z" fill="#ffd27a" stroke="none" />
            </>
        ),
    },
    {
        name: "Options",
        more: true,
        icon: (
            <>
                <path d={gear + "Z"} fill="#f6d880" stroke="#2a2212" strokeWidth="1.200" strokeLinejoin="round" />
                <path d="M15 8Q18 6 21 8V18H15Z" fill="#777" strokeWidth="1" />
            </>
        ),
    },
    {
        name: "Dimension",
        more: true,
        icon: (
            <>
                <path d="M6 5H16M7 8V17M6 19H17M17 19V29M30 19V29M19 27H28" strokeWidth="1.600" />
                <path d="M5 10L7 7L9 10M5 15L7 18L9 15M21 25L19 27L21 29M26 25L28 27L26 29" strokeWidth="1.200" />
                <path d="M14.500 3.500h3v3h-3zM15.500 17.500h3v3h-3zM28.500 17.500h3v3h-3z" fill="#fff" strokeWidth="1" />
            </>
        ),
    },
    {
        name: "Grasshopper",
        icon: (
            <>
                <circle cx="18" cy="17" r="13" fill="#a3cf8b" stroke="#777d78" strokeWidth="2" />
                <path d="M7 15Q11 15 11 19L17 16L25 12L21 18L15 22L12 27Q6 23 7 15Z" fill="#2b3326" stroke="none" opacity=".8" />
                <path d="M22 14Q26 6 29 9M20 16L27 20L25 26M14 20L17 8" stroke="#2b3326" strokeWidth="1" />
            </>
        ),
    },
    {
        name: "Help",
        more: true,
        icon: (
            <>
                <circle cx="18" cy="17" r="12" fill="#3355cf" stroke="#2440a8" strokeWidth="1" />
                <ellipse cx="18" cy="11" rx="9" ry="5.500" fill="#fff" opacity=".18" stroke="none" />
                <path d="M14 13Q14 9 18 9Q22.500 9 22.500 13Q22.500 15 20 16.500Q18 18 18 20" stroke="#fff" strokeWidth="3" />
                <circle cx="18" cy="24" r="1.800" fill="#fff" stroke="none" />
            </>
        ),
    },
]
